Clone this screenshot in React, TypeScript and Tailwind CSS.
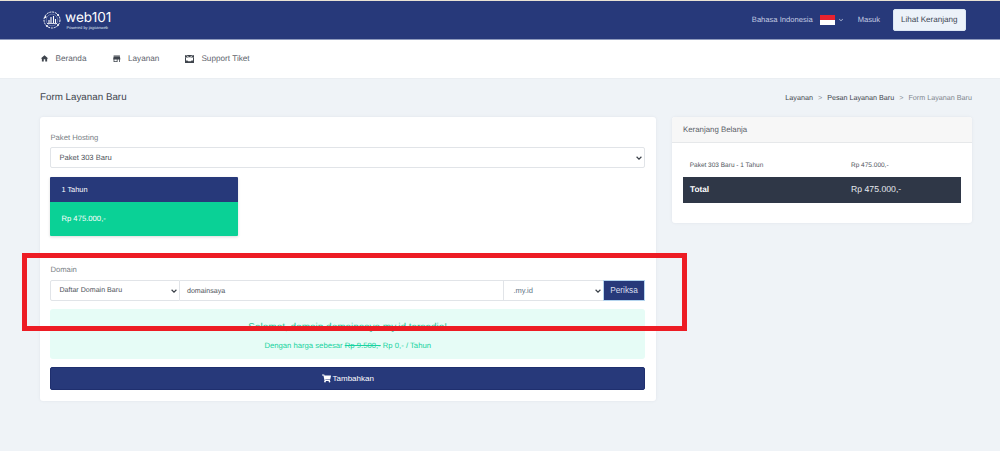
import { MdHome, MdStore, MdKeyboardArrowDown } from "react-icons/md";
import { FaShoppingCart } from "react-icons/fa";

function Logo() {
  return (
    <svg width="18" height="18" viewBox="0 0 18 18" fill="none" stroke="#fff">
      <circle cx="9" cy="9" r="8" strokeWidth="1" strokeDasharray="2 0.9" />
      <circle cx="9" cy="9" r="5.8" strokeWidth="0.4" opacity="0.7" />
      <path d="M4 12.5h10" strokeWidth="0.8" />
      <path d="M6 12V9M8 12V6M10.5 12V5M12.5 12V8" strokeWidth="1.1" />
      <circle cx="2.5" cy="6" r="1" fill="#fff" stroke="none" />
      <circle cx="15" cy="4" r="1" fill="#fff" stroke="none" />
      <circle cx="4" cy="15" r="1" fill="#fff" stroke="none" />
      <circle cx="15" cy="14" r="1" fill="#fff" stroke="none" />
    </svg>
  );
}

function TicketIcon() {
  return (
    <svg width="9" height="8" viewBox="0 0 9 8" fill="none">
      <path d="M0 0.8C0 .3.3 0 .8 0h7.4c.5 0 .8.3.8.8V2.4H0Z" fill="#3f454d" />
      <path d="M1.5 0.6 4.5 2.8 7.5 0.6" stroke="#fff" strokeWidth="0.8" />
      <path d="M0.5 2.4V7.5H8.5V2.4" stroke="#3f454d" strokeWidth="1" />
      <path d="M0 5.5H2.5L3.2 6.2H5.8L6.5 5.5H9V7.4c0 .4-.2.6-.6.6H.6C.2 8 0 7.8 0 7.4Z" fill="#3f454d" />
    </svg>
  );
}

function Chevron() {
  return (
    <svg width="6" height="4" viewBox="0 0 6 4" fill="none" className="mr-[2px] shrink-0">
      <path d="M0.6 0.8 3 3.1 5.4 0.8" stroke="#3a4048" strokeWidth="1.2" />
    </svg>
  );
}

export default function App() {
  return (
    <div className="relative h-[451px] w-[1000px] overflow-hidden bg-[#eff3f7] font-['Liberation_Sans',Arial,sans-serif] text-[7.7px] text-[#5b6169] [text-rendering:geometricPrecision]">
      {/* Header */}
      <header className="flex h-[40px] items-center justify-between border-t border-t-[#e9e2d4] border-b border-b-[#8f9bbd] bg-[#27397a] pl-[43px] pr-[34.5px]">
        <div className="flex items-center gap-[4px]">
          <Logo />
          <div className="flex flex-col">
            <span className="text-[13.6px] leading-[14px] text-white font-['Inter',sans-serif]">web101</span>
            <span className="ml-[1.5px] text-[4px] leading-[5px] text-[#dfe3ef]">Powered by jagoanweb</span>
          </div>
        </div>
        <div className="flex items-center text-[#c4cce2]">
          <span className="text-[7.6px]">Bahasa Indonesia</span>
          <span className="ml-[7px] flex h-[10px] w-[15px] flex-col overflow-hidden">
            <span className="h-[5px] bg-[#e8222f]" />
            <span className="h-[5px] bg-white" />
          </span>
          <MdKeyboardArrowDown className="ml-[2px] text-[8px]" />
          <span className="ml-[13px] text-[7.6px]">Masuk</span>
          <span className="ml-[13px] flex h-[21.5px] w-[72.5px] items-center justify-center rounded-[2px] border border-[#dbe6f3] bg-[#ecf2f9] text-[8.1px] text-[#3d4653]">
            Lihat Keranjang
          </span>
        </div>
      </header>

      {/* Nav */}
      <nav className="flex h-[38px] items-center bg-white pl-[39.5px] text-[8.2px] text-[#5e646c] shadow-[0_1px_1px_rgba(0,0,0,0.02)]">
        <span className="flex items-center"><MdHome className="text-[9px] text-[#3f454d]" /><span className="ml-[7px]">Beranda</span></span>
        <span className="ml-[26px] flex items-center"><MdStore className="text-[9.5px] text-[#3f454d]" /><span className="ml-[6px]">Layanan</span></span>
        <span className="ml-[26px] flex items-center"><TicketIcon /><span className="ml-[7px]">Support Tiket</span></span>
      </nav>

      {/* Title */}
      <div className="flex h-[39px] items-center justify-between pl-[40px] pr-[28px] pt-[1px]">
        <span className="text-[9.8px] text-[#3f454d]">Form Layanan Baru</span>
        <div className="flex items-center text-[7.2px] text-[#3f454d]">
          <span>Layanan</span>
          <span className="mx-[5px] text-[#8a9098]">&gt;</span>
          <span>Pesan Layanan Baru</span>
          <span className="mx-[5px] text-[#8a9098]">&gt;</span>
          <span className="text-[#80868e]">Form Layanan Baru</span>
        </div>
      </div>

      <div className="flex items-start gap-[16px] pl-[40px] pr-[28px]">
        {/* Main card */}
        <main className="flex h-[284px] w-[616px] flex-col rounded-[3px] bg-white pl-[10.4px] pr-[11px] pt-[16px] shadow-[0_0_3px_rgba(120,130,150,0.12)]">
          <label className="mb-[4px] block h-[10px] leading-[10px] text-[#7a7f86]">Paket Hosting</label>
          <div className="flex h-[21px] w-full items-center rounded-[2px] border border-[#e1e4e8] bg-white">
            <select className="h-full min-w-0 flex-1 appearance-none bg-transparent pl-[8px] text-[7.6px] text-[#4f555c] outline-none [text-rendering:geometricPrecision]">
              <option>Paket 303 Baru</option>
            </select>
            <Chevron />
          </div>
          <div className="mt-[9px] w-[187.5px] overflow-hidden rounded-[1px] shadow-[0_1px_3px_rgba(0,0,0,0.15)]">
            <div className="flex h-[25px] items-center bg-[#27397a] pl-[11px] text-[7.4px] text-white">1 Tahun</div>
            <div className="flex h-[34px] items-center bg-[#0ad196] pl-[11px] text-white">Rp 475.000,-</div>
          </div>

          <label className="mb-[5px] mt-[29px] block h-[10px] leading-[10px] text-[#7a7f86]">Domain</label>
          <div className="flex h-[21px] w-full">
            <div className="flex h-full w-[129.6px] items-center rounded-l-[2px] border border-[#e1e4e8] bg-white">
              <select className="h-full min-w-0 flex-1 appearance-none bg-transparent pl-[8px] text-[7.1px] text-[#4f555c] outline-none [text-rendering:geometricPrecision]">
                <option>Daftar Domain Baru</option>
              </select>
              <Chevron />
            </div>
            <div className="flex h-full w-[324px] items-center border-y border-r border-[#e1e4e8] pl-[7px] pt-[1px] text-[7.1px] text-[#4f555c]">domainsaya</div>
            <div className="flex h-full w-[99px] items-center border-y border-[#e1e4e8] bg-white">
              <select className="h-full min-w-0 flex-1 appearance-none bg-transparent pl-[9.5px] text-[7.5px] text-[#5f7385] outline-none [text-rendering:geometricPrecision]">
                <option>.my.id</option>
              </select>
              <Chevron />
            </div>
            <button className="flex h-full w-[42px] items-center justify-center border border-[#b4d4ee] bg-[#27397a] text-[8.3px] text-[#d8deee]">Periksa</button>
          </div>

          <div className="mt-[8px] flex h-[50px] flex-col items-center rounded-[3px] bg-[#e6fcf6] pt-[13px] text-[#18d3a0]">
            <span className="text-[10px] leading-[12px] text-[#2cbd93]">Selamat, domain domainsaya.my.id tersedia!</span>
            <span className="mt-[7px] leading-[10px]">Dengan harga sebesar <s>Rp 9.500,-</s> Rp 0,- / Tahun</span>
          </div>

          <button className="mt-[8px] flex h-[23px] w-full items-center justify-center rounded-[2px] border border-[#1f2f6e] bg-[#27397a] text-[8px] text-white">
            <FaShoppingCart className="mr-[2px] text-[9px]" />Tambahkan
          </button>
        </main>

        {/* Cart */}
        <aside className="h-[106px] w-[300px] overflow-hidden rounded-[3px] bg-white shadow-[0_0_3px_rgba(120,130,150,0.12)]">
          <div className="flex h-[26px] items-center border-b border-[#e6e8ea] bg-[#f7f7f7] pl-[11px] text-[7.85px] text-[#5b6169]">Keranjang Belanja</div>
          <div className="px-[11px] pt-[12px]">
            <div className="flex h-[22px] items-center text-[6.5px] text-[#4f555c]">
              <span className="w-[168px] pl-[6.7px]">Paket 303 Baru - 1 Tahun</span>
              <span>Rp 475.000,-</span>
            </div>
            <div className="flex h-[26px] items-center bg-[#2f3747] text-white">
              <span className="w-[168px] pl-[7px] text-[8.25px] font-bold">Total</span>
              <span className="text-[8.7px] text-[#e5e8ee]">Rp 475.000,-</span>
            </div>
          </div>
        </aside>
      </div>

      {/* Annotation */}
      <div className="pointer-events-none absolute left-[22px] top-[253px] h-[78px] w-[665px] border-[5px] border-[#ed1c24]" />
    </div>
  );
}
